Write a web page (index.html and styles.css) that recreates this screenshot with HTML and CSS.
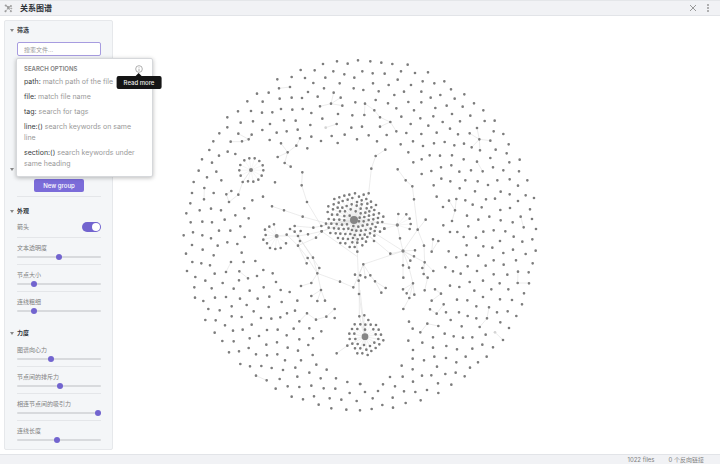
FILE: index.html
```html
<!DOCTYPE html>
<html lang="zh-CN">
<head>
<meta charset="utf-8">
<title>关系图谱</title>
<link rel="stylesheet" href="styles.css">
</head>
<body>
<header class="topbar">
  <svg class="graph-icon" viewBox="0 0 30 30" aria-hidden="true">
    <path d="M7 6L14 14L22 8M14 14L6 24M14 14L23 23M14 14L24 15"/>
    <circle cx="6" cy="5" r="2.5"/><circle cx="23" cy="7" r="2.5"/><circle cx="5" cy="24" r="2.5"/><circle cx="23" cy="24" r="2.5"/><circle cx="14" cy="14" r="3"/><circle cx="25" cy="15" r="1.5"/>
  </svg>
  <h1 class="title">关系图谱</h1>
  <button class="icon-button" aria-label="关闭"><svg viewBox="0 0 8 8"><path d="M1 1L7 7M7 1L1 7"/></svg></button>
  <button class="icon-button" aria-label="更多"><svg class="more" viewBox="0 0 8 8"><circle cx="4" cy="1" r="1"/><circle cx="4" cy="4" r="1"/><circle cx="4" cy="7" r="1"/></svg></button>
</header>
<main class="workspace">
  <svg class="graph" id="graph" viewBox="0 0 2160 1314" role="img" aria-label="关系图谱"></svg>
  <aside class="panel">
    <section class="section filters">
      <h2 class="heading">筛选</h2>
      <div class="search">
        <input class="search-input" type="text" placeholder="搜索文件..." aria-label="搜索文件">
        <div class="popup">
          <div class="popup-head">
            <span>SEARCH OPTIONS</span>
            <button class="info" aria-label="Read more">
              <svg viewBox="0 0 24 24"><circle cx="12" cy="12" r="10"/><path d="M12 11V18M12 6V8"/></svg>
              <span class="tooltip">Read more</span>
            </button>
          </div>
          <ul class="options">
            <li><b>path:</b> match path of the file</li>
            <li><b>file:</b> match file name</li>
            <li><b>tag:</b> search for tags</li>
            <li><b>line:()</b> search keywords on same line</li>
            <li><b>section:()</b> search keywords under same heading</li>
          </ul>
        </div>
      </div>
    </section>
    <section class="section groups">
      <h2 class="heading"></h2>
      <button class="new-group">New group</button>
    </section>
    <section class="section">
      <h2 class="heading">外观</h2>
      <label class="toggle-row">箭头 <input class="toggle" type="checkbox" checked></label>
      <label class="slider-row">文本透明度<input type="range" value="50"></label>
      <label class="slider-row">节点大小<input type="range" value="18"></label>
      <label class="slider-row">连线粗细<input type="range" value="18"></label>
    </section>
    <section class="section">
      <h2 class="heading">力度</h2>
      <label class="slider-row">图谱向心力<input type="range" value="40"></label>
      <label class="slider-row">节点间的排斥力<input type="range" value="51"></label>
      <label class="slider-row">相连节点间的吸引力<input type="range" value="100"></label>
      <label class="slider-row">连线长度<input type="range" value="47"></label>
    </section>
  </aside>
</main>
<footer class="status"><span>1022 files</span><span>0 个反向链接</span></footer>
<script src="graph.js"></script>
</body>
</html>
```
FILE: styles.css
```css
* { box-sizing: border-box; }
body {
  margin: 0;
  min-height: 100vh;
  display: flex;
  flex-direction: column;
  background: #fff;
  color: #808080;
  font: 6px/10px Inter, "Noto Sans CJK SC", sans-serif;
}
button, input { font: inherit; margin: 0; }
button { border: 0; padding: 0; background: none; color: inherit; }

.topbar {
  display: flex;
  align-items: center;
  gap: 7px;
  height: 16px;
  padding: 0 8px 0 4px;
  background: #f1f2f5;
  border-top: 1px solid #e4e6e9;
  border-bottom: 1px solid #e2e4e8;
}
.graph-icon { width: 9px; height: 9px; stroke: #9a9a9a; stroke-width: 2; fill: #9a9a9a; }
.title { flex: 1; margin: 0; font-size: 8px; line-height: 14px; font-weight: 600; color: #2e3338; }
.icon-button { width: 8px; height: 8px; display: flex; }
.icon-button svg { width: 8px; height: 8px; fill: none; stroke: #999; stroke-width: 1; }
.icon-button .more { fill: #999; stroke: none; }

.workspace { flex: 1; display: grid; min-height: 0; }
.graph { grid-area: 1 / 1; width: 100%; height: 100%; min-height: 0; contain: size; }
.links { fill: none; stroke: #e3e3e3; stroke-width: 2; }
.spokes { fill: none; stroke: #e0e0e0; stroke-width: 1; }
.dots { fill: none; stroke: #7c7c7c; stroke-width: 8; stroke-linecap: round; }
.faint { fill: #d4d4d4; }
.hub { fill: #858585; }

.panel {
  grid-area: 1 / 1;
  justify-self: start;
  position: relative;
  width: 109px;
  margin: 4px;
  padding: 2px 11px 0 12px;
  background: #f4f6f8;
  border: 1px solid #e6e8eb;
  border-radius: 2px;
}
.section { padding-bottom: 7px; }
.section:last-child { padding-bottom: 0; }
.filters { min-height: 139px; }
.heading {
  position: relative;
  height: 14px;
  margin: 0;
  font-size: 6px;
  line-height: 14px;
  font-weight: 700;
  color: #2e3338;
}
.heading::before {
  content: "";
  position: absolute;
  left: -7px;
  top: 6px;
  border: 2px solid transparent;
  border-top: 3px solid #888;
  border-bottom: 0;
}
.search { position: relative; padding-top: 5px; }
.search-input {
  display: block;
  width: 100%;
  height: 14px;
  padding: 0 6px;
  border: 1px solid #a79ce0;
  border-radius: 2px;
  background: #fff;
  outline: 0;
}
.search-input::placeholder { color: #999; opacity: 1; }
.popup {
  position: absolute;
  z-index: 1;
  top: 21px;
  left: -1px;
  width: 137px;
  padding: 3px 8px 7px 7px;
  background: #fff;
  border: 1px solid #d6d8db;
  border-radius: 2px;
  box-shadow: 0 1px 4px #0004;
}
.popup-head { display: flex; align-items: center; justify-content: space-between; height: 14px; font-weight: 600; line-height: 12px; }
.info { position: relative; width: 8px; height: 8px; margin-right: 1px; }
.info svg { display: block; width: 8px; height: 8px; fill: none; stroke: #888; stroke-width: 2; }
.tooltip {
  position: absolute;
  top: 11px;
  left: 50%;
  transform: translateX(-50%);
  padding: 0 7px;
  border-radius: 2px;
  background: #151515;
  color: #eee;
  font-size: 6px;
  font-weight: 500;
  line-height: 13px;
  white-space: nowrap;
}
.tooltip::before {
  content: "";
  position: absolute;
  top: -3px;
  left: 50%;
  margin-left: -3px;
  border: 3px solid transparent;
  border-top: 0;
  border-bottom-color: #151515;
}
.options { margin: 0; padding: 0 5px 0 0; list-style: none; font-size: 7px; line-height: 11px; color: #999; }
.options li { margin-bottom: 4px; }
.options li:last-child { margin: 0; }
.options b { font-weight: 400; color: #383c40; }

.groups { display: flex; flex-direction: column; position: relative; }
.new-group {
  align-self: center;
  width: 50px;
  height: 13px;
  margin: 3px 0 4px;
  border-radius: 2px;
  background: #7b6cd9;
  color: #fff;
  font-size: 6px;
  font-weight: 500;
  line-height: 13px;
}
.groups::after { content: ""; border-bottom: 1px solid #e4e6e9; }
.toggle-row { display: flex; align-items: center; justify-content: space-between; height: 20px; padding-bottom: 2px; border-bottom: 1px solid #e4e6e9; }
.toggle { appearance: none; width: 19px; height: 10px; padding: 1px; border-radius: 5px; background: #7264cf; }
.toggle::before { content: ""; display: block; width: 8px; height: 8px; border-radius: 50%; background: #fff; }
.toggle:checked::before { margin-left: auto; }
.slider-row { display: block; height: 27px; padding-top: 5px; border-bottom: 1px solid #e4e6e9; }
.slider-row:last-child { border: 0; }
.slider-row input { appearance: none; display: block; width: 100%; height: 6px; margin-top: 1px; background: none; }
.slider-row input::-webkit-slider-runnable-track { height: 2px; border-radius: 1px; background: #d8dadd; }
.slider-row input::-webkit-slider-thumb { appearance: none; width: 6px; height: 6px; margin-top: -2px; border-radius: 50%; background: #7264cf; }

.status {
  display: flex;
  justify-content: flex-end;
  gap: 14px;
  height: 10px;
  padding-right: 16px;
  border-top: 1px solid #e2e4e8;
  background: #f1f2f5;
  line-height: 9px;
}
```
FILE: graph.js
```js
// Each sector lists nodes and links in its own local coordinates.
const sectors = [
  {
    x: 540, y: 102,
    nodes: `471,34 534,31 429,42 503,41 362,60 404,61 460,64 493,73 335,81 375,84 436,83 523,83 292,88 400,99 479,100 297,115 330,111 432,115 521,115 231,131 266,128 384,126 461,128 299,146 335,143 366,144 413,140 482,143 202,154 248,155 453,161 526,157 420,169 487,167 303,177 337,179 368,177 174,184 213,183 246,188 277,187 394,189 474,192 517,196 142,202 427,206 182,218 219,214 312,211 347,212 270,222 391,225 470,222 142,232 514,233 118,250 175,251 215,254 247,240 290,248 320,244 353,239 206,268 186,274 152,275 100,274 269,270 303,280 360,265 394,260 455,258 494,254 423,273 473,279 531,268 349,287 382,295 88,300 143,305 117,317 166,312 323,307 293,321 66,328 96,338 314,339 332,350 56,362 109,365 81,382 124,391 41,396 285,397 367,367 365,406 73,414 36,429 101,429 154,423 139,433 175,434 72,448 147,456 217,451 249,440 31,460 381,456 276,469 193,475 312,481 59,481 93,476 123,481 19,490 166,496 206,505 368,500 32,517 67,515 96,517 134,509 181,529 344,528 330,537 400,533`,
    links: `M297 115L330 111M420 169L453 161L461 128M453 161L482 143M453 161L487 167M437 233L470 222M175 251L206 268L215 254M152 275H186L206 268M303 280L323 307L349 287L360 265M293 321L323 307L314 339L332 350M188 396L175 434L147 456L139 433L154 423M213 360L188 396M73 414L72 448M367 367L365 406L381 456L424 528M276 469L312 481L368 500L440 520L522 510M344 528L400 533L424 528L522 510`,
    faint: [437, 233],
    hubs: [{ x: 213, y: 360, r: 6, nodes: `208,325 224,325 193,331 238,333 181,345 248,346 178,361 250,361 182,377 245,377 235,389 220,395 204,394 188,396` }]
  },
  {
    x: 1080, y: 102,
    nodes: `31,34 64,38 97,42 143,44 7,64 38,70 74,71 123,64 165,69 204,67 113,89 39,100 86,105 153,105 188,94 223,100 253,94 10,120 56,124 132,125 184,125 273,118 103,135 241,135 313,133 212,143 284,146 47,150 145,156 184,157 342,160 15,161 84,160 260,167 308,170 43,181 109,175 162,181 226,174 370,181 13,195 60,202 124,200 181,205 220,199 276,192 331,197 91,216 152,222 248,216 300,214 374,213 404,212 6,230 60,230 205,227 270,236 351,234 109,244 139,249 184,252 230,248 329,250 294,253 401,244 430,252 26,256 80,255 51,274 159,274 222,280 254,276 358,268 391,272 122,283 189,288 283,286 312,281 335,292 446,283 76,299 145,307 360,301 407,299 440,310 47,318 209,316 240,317 276,316 185,328 311,328 391,324 479,329 160,337 351,335 448,337 34,356 113,358 243,352 274,346 214,363 298,365 333,361 368,364 399,352 430,361 477,364 185,372 137,391 244,386 271,394 316,391 353,394 412,391 449,388 502,391 157,409 221,406 299,415 384,405 474,407 345,424 422,425 230,440 449,433 497,436 522,444 162,448 267,452 289,447 316,451 378,448 405,446 474,453 338,464 249,471 365,472 421,480 450,474 510,478 285,481 321,497 388,500 482,500 197,509 355,509 422,511 458,517 516,507 250,526 276,513 325,529 491,532 173,539 528,537`,
    links: `M13 195L15 161L43 181L60 202L91 216L60 230M91 216L109 244M351 234L358 268L329 250M391 272L358 268L335 292M358 268L360 301M76 299L47 318L34 356L26 430M113 358L137 391L157 409L162 448L173 539L197 509M267 452L285 481L289 447M285 481L276 513M351 335L368 364M482 500L491 532M112 525L-18 510`,
    hubs: [{ x: 112, y: 525, r: 5, nodes: `115,492 139,493 149,506 152,522 149,537 73,536` }]
  },
  {
    x: 540, y: 642,
    nodes: `11,16 39,7 67,16 93,25 117,2 151,2 194,21 142,37 172,42 113,47 36,45 68,59 185,68 18,71 101,76 37,96 64,100 90,106 153,96 191,96 226,93 21,123 104,131 138,126 178,124 250,120 278,130 231,138 204,145 46,141 76,152 177,151 128,159 288,156 43,172 95,175 161,176 251,172 302,180 329,186 209,182 45,203 70,213 105,203 138,201 180,206 233,206 268,200 305,216 352,212 155,229 200,225 266,231 85,237 119,241 221,244 345,242 321,250 381,250 155,259 185,261 243,264 274,266 301,262 358,274 408,269 439,260 464,237 464,264 76,270 107,271 135,286 215,284 104,308 159,302 188,299 261,300 293,299 341,296 388,295 424,304 209,325 237,318 320,316 358,328 399,325 127,333 161,334 291,337 259,344 385,345 206,354 323,353 354,362 147,367 177,364 228,373 261,376 292,373 398,375 470,370 315,391 363,391 181,402 210,409 244,408 275,414 346,413 409,404 309,420 440,419 388,428 228,437 352,440 260,451 299,447 422,445 468,445 502,456 287,476 323,469 358,471 394,467 431,475 466,476 335,500 402,499 369,508 449,505 484,509 509,489 530,513 416,524 454,535 499,539 540,541 540,462 344,5 362,3 354,18 360,33 354,47 384,13 408,23 425,4 383,84 399,83 380,100 418,114 412,130 394,159 363,168 423,180 394,198 412,213 435,212 480,155 520,172 525,134 536,152 537,192 538,259`,
    links: `M153 96L138 126M178 124L204 145M358 274L381 250L408 269L439 260L464 237M228 437L260 451M290 18L354 18L384 13L425 4L522 -30M354 18L360 33L354 47L380 100M354 18L344 5L330 -3M354 47L320 14M354 47L383 84L412 130L399 83L354 18M354 18L418 114L412 130L394 159L363 168M412 130L423 180L394 198M412 213L423 180L435 212M412 130L480 155L520 172L550 103M354 47L408 23L425 4M522 -30L532 65L537 192L555 320M425 4L532 80M538 152V259L555 320M502 347L470 370M362 3L354 18`,
    hubs: [{ x: 290, y: 18, r: 6, nodes: `257,15 250,29 261,40 270,54 286,57 302,54 318,40 320,14 255,-1 268,-10 282,-17` }]
  },
  {
    x: 1080, y: 642,
    nodes: `120,25 91,71 165,61 162,79 151,92 129,106 147,113 192,47 219,28 235,33 215,65 194,97 187,114 220,123 191,132 203,143 130,143 159,160 129,178 140,190 163,194 148,204 194,181 130,237 10,103 1,136 16,142 31,136 45,154 77,174 64,188 270,6 292,6 311,21 348,23 370,5 401,1 436,4 461,20 517,28 420,33 487,35 320,46 370,49 397,53 459,59 527,62 266,64 430,69 497,72 289,82 318,75 355,77 401,91 468,91 323,109 377,107 431,104 518,100 256,112 279,124 302,131 351,123 401,133 442,134 474,125 506,127 369,152 329,156 419,160 473,159 507,160 270,167 298,171 343,182 394,178 445,178 492,190 225,178 243,191 215,212 291,209 322,211 369,201 420,208 456,210 251,223 486,223 210,238 349,229 387,232 230,251 258,247 297,247 411,247 443,244 323,258 349,265 381,265 469,258 272,270 421,277 147,275 202,281 235,288 305,289 359,291 447,294 158,296 181,307 254,311 281,319 309,323 337,322 377,314 429,330 219,322 145,332 187,338 367,344 399,352 259,348 219,353 291,358 337,356 159,360 158,386 192,391 223,380 258,384 317,380 380,380 289,397 354,397 125,407 158,418 231,410 330,413 90,441 128,440 186,437 214,436 256,432 287,428 314,439 159,455 234,460 274,464 1,462 69,463 105,469 15,486 54,483 132,484 166,486 201,480 235,489 98,503 38,505 182,511 137,519 67,525 99,533 35,537`,
    links: `M129 63L-18 -30M129 63L10 103L-4 136M16 142L10 103L31 136L45 154L77 174M45 154L64 188M129 63L91 71L30 20M129 63L120 25L112 -15M129 63L173 -1L192 47L194 97L187 114M129 63L165 61M129 63L162 79M129 63L151 92M129 63V143M129 63L147 113L159 160L129 178M129 63L194 97L220 123M194 97L191 132L203 143L194 181M219 28L215 65L235 33M140 190L159 160L163 194M159 160L148 204L130 237M474 125L473 159H507M225 178L243 191L215 212M251 223L230 251L210 238M387 232L381 265L359 291M181 307L202 281L235 288M405 307L429 330M15 320L0 180`,
    faint: [405, 307],
    hubs: [
      { x: 129, y: 63, r: 5, nodes: `` },
      { x: 15, y: 320, r: 10, nodes: `13,256 25,270 1,283 16,284 32,284 48,285 15,299 40,298 56,299 47,313 63,314 55,327 70,331 43,338 58,343 12,345 30,348 47,354 1,355 19,359 34,363 7,370 23,375 -16,283 -24,297 -32,311 -8,297 -17,311 -31,327 -14,327 -23,341 -7,342 -38,347 -15,355 -8,370` }
    ]
  },
  {
    x: 930, y: 492, nodes: ``, links: ``,
    hubs: [{ x: 132, y: 120, r: 12, nodes: `135,40 118,44 103,47 88,52 73,57 176,40 161,44 147,50 127,54 113,59 98,63 86,68 71,73 55,79 169,57 155,61 141,66 183,65 172,71 155,73 140,77 125,73 110,78 97,83 83,83 69,88 53,96 198,75 184,82 170,85 152,86 137,94 122,88 105,94 90,94 82,104 66,104 193,90 178,94 166,98 152,100 119,107 103,108 207,100 191,104 177,107 163,111 149,113 220,110 204,114 190,118 176,120 161,124 147,124 56,117 72,119 88,119 103,121 48,131 64,131 80,132 96,134 111,133 217,126 203,128 187,132 172,134 158,137 145,140 34,138 56,143 72,145 86,146 101,147 115,146 130,138 223,146 197,141 182,146 167,150 153,152 139,152 126,150 35,154 61,159 77,160 91,161 106,162 121,162 134,165 210,155 194,153 180,160 164,164 150,165 193,167 84,174 99,176 114,177 129,174 143,178 157,176 172,171 168,185 192,183 91,189 106,190 127,187 142,188 157,196 119,201 134,201 142,215` }]
  }
];

const points = text => text.split(" ").filter(Boolean).map(p => p.split(",").map(Number));
const dotPath = list => list.map(([x, y]) => `M${x} ${y}h0`).join("");
const lines = [];
const marks = [];

for (const s of sectors) {
  const open = `<g transform="translate(${s.x} ${s.y})">`;
  const spokes = s.hubs.map(h => points(h.nodes).map(([x, y]) => `M${h.x} ${h.y}L${x} ${y}`).join("")).join("");
  const all = [...points(s.nodes), ...s.hubs.flatMap(h => points(h.nodes))];
  lines.push(`${open}<path class="spokes" d="${spokes}"/><path class="links" d="${s.links}"/></g>`);
  const hubs = s.hubs.map(h => `<circle class="hub" cx="${h.x}" cy="${h.y}" r="${h.r}"/>`).join("");
  const faint = s.faint ? `<circle class="faint" cx="${s.faint[0]}" cy="${s.faint[1]}" r="4"/>` : "";
  marks.push(`${open}<path class="dots" d="${dotPath(all)}"/>${hubs}${faint}</g>`);
}
document.getElementById("graph").innerHTML = lines.join("") + marks.join("");
```
